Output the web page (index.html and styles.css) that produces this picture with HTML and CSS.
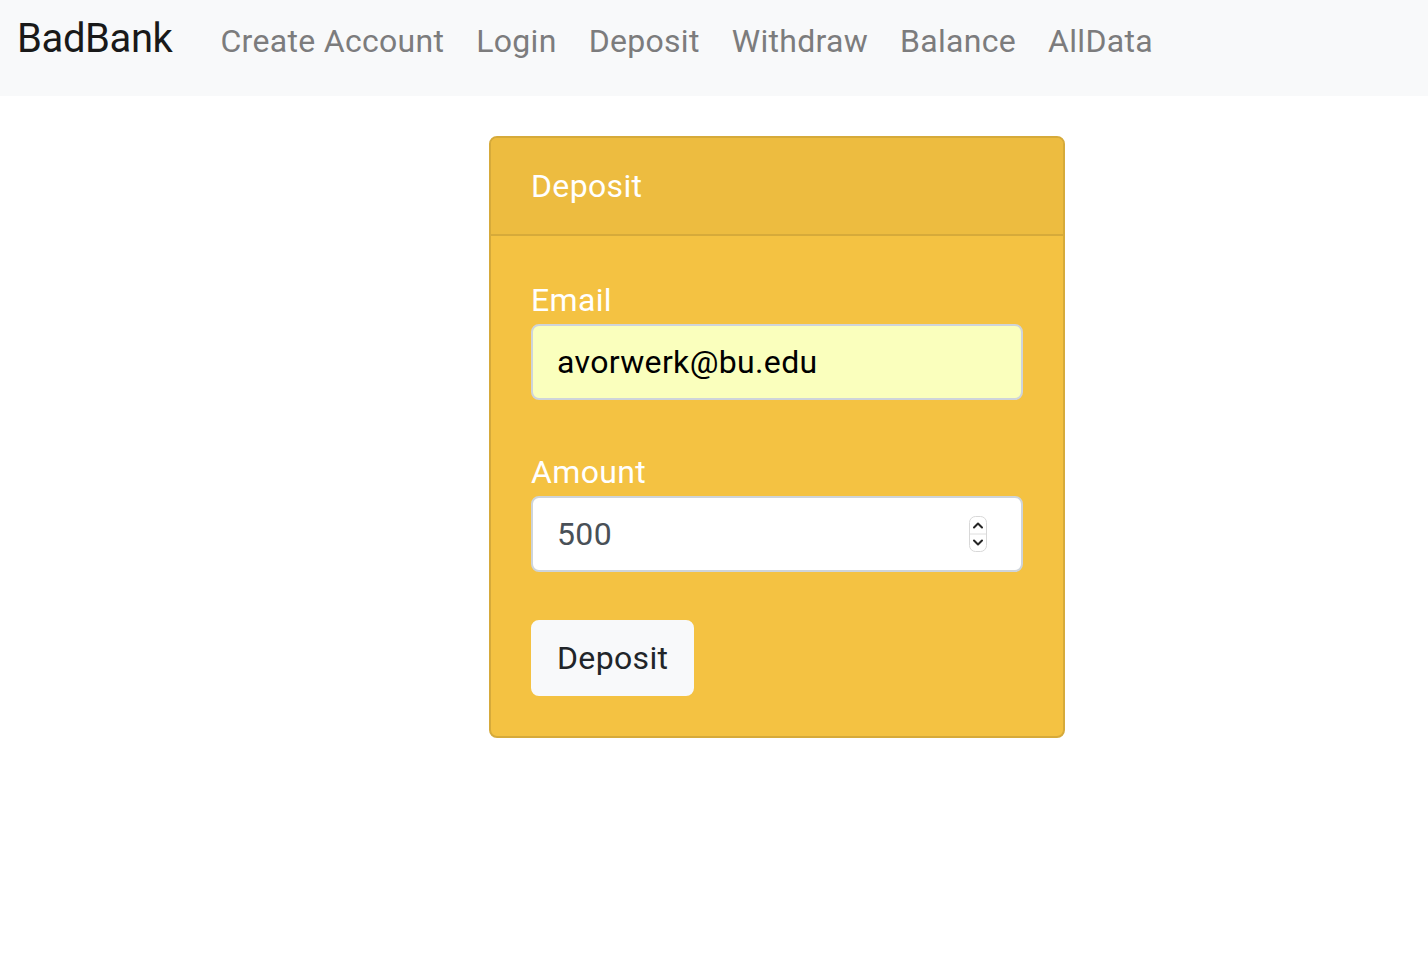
FILE: index.html
```html
<!DOCTYPE html>
<html lang="en">
<head>
<meta charset="utf-8">
<title>BadBank</title>
<link rel="stylesheet" href="styles.css">
</head>
<body>
<nav class="navbar">
  <a class="brand" href="#">BadBank</a>
  <ul class="nav">
    <li><a class="nav-link" href="#">Create Account</a></li>
    <li><a class="nav-link" href="#">Login</a></li>
    <li><a class="nav-link" href="#">Deposit</a></li>
    <li><a class="nav-link" href="#">Withdraw</a></li>
    <li><a class="nav-link" href="#">Balance</a></li>
    <li><a class="nav-link" href="#">AllData</a></li>
  </ul>
</nav>
<main class="page">
  <div class="card">
    <div class="card-header">Deposit</div>
    <div class="card-body">
      <div class="label">Email</div>
      <div class="field field-autofill"><span class="value value-dark">avorwerk@bu.edu</span></div>
      <div class="spacer"></div>
      <div class="label">Amount</div>
      <div class="field">
        <span class="value">500</span>
        <span class="spinner">
          <svg width="18" height="36" viewBox="0 0 18 36">
            <rect x="0.5" y="0.5" width="17" height="35" rx="6" fill="#fff" stroke="#d8d8d8"/>
            <line x1="1" y1="18" x2="17" y2="18" stroke="#dedede"/>
            <polyline points="5,11.5 9,7.5 13,11.5" fill="none" stroke="#262626" stroke-width="2" stroke-linecap="round" stroke-linejoin="round"/>
            <polyline points="5,24.5 9,28.5 13,24.5" fill="none" stroke="#262626" stroke-width="2" stroke-linecap="round" stroke-linejoin="round"/>
          </svg>
        </span>
      </div>
      <div class="spacer"></div>
      <button class="btn" type="button">Deposit</button>
    </div>
  </div>
</main>
</body>
</html>
```

FILE: styles.css
```css
* { box-sizing: border-box; }
html, body { margin: 0; padding: 0; }
body {
  font-family: Roboto, "Liberation Sans", Arial, sans-serif;
  background: #fff;
  color: #212529;
  letter-spacing: 0.35px;
}
.navbar {
  display: flex;
  align-items: baseline;
  height: 96px;
  padding: 15px 16px 0 17px;
  background: #f8f9fa;
}
.brand {
  font-size: 40px;
  line-height: 48px;
  letter-spacing: -0.4px;
  color: #191919;
  text-decoration: none;
  margin-right: 32px;
}
.nav {
  display: flex;
  align-items: baseline;
  list-style: none;
  margin: 0;
  padding: 0;
}
.nav-link {
  display: block;
  font-size: 32px;
  line-height: 48px;
  padding: 0 16px;
  letter-spacing: 0.3px;
  color: #7c7c7d;
  text-decoration: none;
}
.page {
  padding: 40px 0 0 489px;
}
.card {
  width: 576px;
  background: #f4c242;
  border: 2px solid #d6aa3a;
  border-radius: 8px;
  color: #fff;
  overflow: hidden;
}
.card-header {
  background: #edbc40;
  border-bottom: 2px solid #d6aa3a;
  padding: 24px 40px;
  font-size: 32px;
  line-height: 48px;
}
.card-body {
  padding: 40px;
}
.label {
  font-size: 32px;
  line-height: 48px;
  color: #fff;
}
.spacer { height: 48px; }
.field {
  display: flex;
  align-items: center;
  height: 76px;
  padding: 0 34px 0 24px;
  background: #fff;
  border: 2px solid #ced4da;
  border-radius: 8px;
}
.field-autofill { background: #faffbd; }
.value {
  flex: 1;
  font-size: 32px;
  line-height: 48px;
  color: #495057;
}
.value-dark { color: #000; }
.spinner {
  display: flex;
  width: 18px;
  height: 36px;
}
.btn {
  display: block;
  height: 76px;
  padding: 0 24px;
  font-family: inherit;
  font-size: 32px;
  line-height: 48px;
  letter-spacing: 0.35px;
  color: #212529;
  background: #f8f9fa;
  border: 2px solid #f8f9fa;
  border-radius: 8px;
}
```
